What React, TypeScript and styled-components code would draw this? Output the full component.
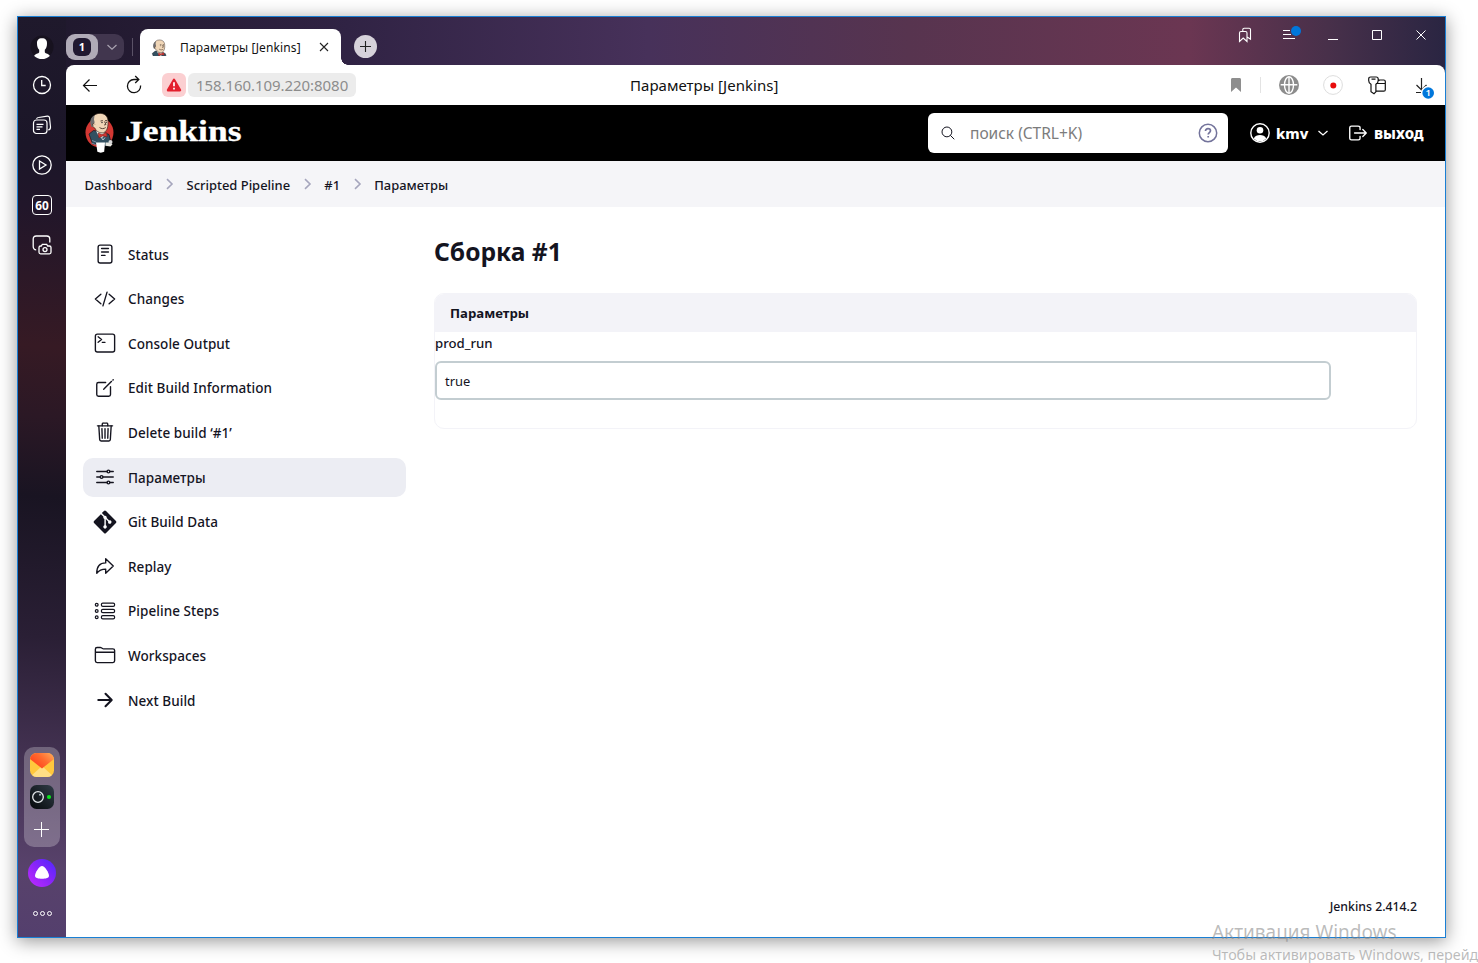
import React from 'react';
import styled, { createGlobalStyle, css } from 'styled-components';
import {
  IoReaderOutline, IoCodeSlashOutline, IoTerminalOutline, IoCreateOutline, IoTrashOutline,
  IoOptionsOutline, IoArrowRedoOutline, IoFolderOutline, IoArrowForward, IoLogOutOutline, IoSearchOutline,
} from 'react-icons/io5';
import { FaGitAlt } from 'react-icons/fa';

const Global = createGlobalStyle`
  * { box-sizing: border-box; }
  body { margin: 0; background: #fff; color: #14141f; font-family: "Noto Sans", "Open Sans", sans-serif; }
  svg { display: block; flex: none; }
`;

const Desktop = styled.div`
  position: relative;
  width: 1478px;
  height: 963px;
  padding: 16px 0 0 17px;
  overflow: hidden;
`;

const BrowserWindow = styled.div`
  display: flex;
  width: 1429px;
  height: 922px;
  border: 1px solid #1a7fd4;
  background: linear-gradient(90deg, #1e182c 0, #251b33 130px, #302344 330px, #47315a 630px, #57344f 890px, #6b3652 1170px, #48304a 1310px, #2a2542 1427px);
  box-shadow: 0 3px 17px rgba(0, 0, 0, 0.42);
`;

const Rail = styled.aside`
  display: flex;
  flex-direction: column;
  align-items: center;
  width: 48px;
  background: linear-gradient(184deg, #1f192c 0, #1b1628 130px, #21162a 190px, #361a24 330px, #2b1825 400px, #191422 480px, #2a1f35 620px, #41304f 730px, #58426b 850px, #543f6d 920px);
`;

const RailIcon = styled.div<{ $first?: boolean }>`
  display: flex;
  align-items: center;
  justify-content: center;
  width: 40px;
  height: 40px;
  ${p => p.$first && css`margin-top: 10px; margin-bottom: -2px;`}
`;

const Tray = styled.div`
  display: flex;
  flex-direction: column;
  align-items: center;
  gap: 8px;
  width: 36px;
  height: 100px;
  margin-top: auto;
  padding-top: 6px;
  border-radius: 10px;
  background: rgba(255, 255, 255, 0.25);
`;

const Assistant = styled.div`
  display: flex;
  align-items: center;
  justify-content: center;
  width: 28px;
  height: 28px;
  margin: 12px 0 24px;
  border-radius: 50%;
  background: linear-gradient(45deg, #c22aff, #8b25f8 50%, #4b28ff);
`;

const MoreDots = styled.div`
  display: flex;
  gap: 2px;
  margin-bottom: 21px;
  span { width: 5px; height: 5px; border: 1.4px solid #fff; border-radius: 50%; }
`;

const Main = styled.div`
  display: flex;
  flex-direction: column;
  flex: 1;
  min-width: 0;
`;

const TabStrip = styled.div`
  display: flex;
  height: 48px;
`;

const GroupPill = styled.div`
  display: flex;
  align-items: center;
  width: 58px;
  height: 26px;
  margin-top: 17px;
  border-radius: 9px;
  background: #41364e;
`;

const GroupCount = styled.div`
  display: flex;
  align-items: center;
  justify-content: center;
  width: 32px;
  height: 26px;
  margin-right: 7px;
  border-radius: 9px;
  background: #b0abb7;
  span {
    width: 18px; height: 18px; border-radius: 6px; background: #201830; color: #fff;
    font-size: 11px; font-weight: 700; line-height: 18px; text-align: center;
  }
`;

const StripDivider = styled.div`
  width: 1px;
  height: 18px;
  margin: 21px 7px 0 8px;
  background: #5b5267;
`;

const Tab = styled.div`
  position: relative;
  display: flex;
  align-items: center;
  width: 201px;
  height: 36px;
  margin-top: 12px;
  padding-left: 11px;
  border-radius: 8px 8px 0 0;
  background: #fff;
  &::after {
    content: "";
    position: absolute;
    right: -7px;
    bottom: 0;
    width: 7px;
    height: 7px;
    background: radial-gradient(circle at 7px 0, transparent 6.5px, #fff 7px);
  }
`;

const TabTitle = styled.span`
  width: 134px;
  margin-left: 12px;
  padding-top: 1px;
  color: #111;
  font-size: 12px;
  letter-spacing: 0.13px;
  line-height: 18px;
  white-space: nowrap;
`;

const NewTab = styled.div`
  display: flex;
  align-items: center;
  justify-content: center;
  width: 23px;
  height: 23px;
  margin: 18px 0 0 13px;
  border-radius: 50%;
  background: #d6d2da;
`;

const WindowControls = styled.div`
  display: flex;
  height: 36px;
  margin-left: auto;
  padding-right: 2px;
`;

const Slot = styled.div`
  display: flex;
  align-items: center;
  justify-content: center;
  width: 44px;
`;

const Toolbar = styled.div`
  display: flex;
  height: 40px;
  padding: 0 2px;
  border-radius: 8px 8px 0 0;
  background: #fff;
`;

const Warning = styled.div`
  display: flex;
  align-items: center;
  justify-content: center;
  width: 24px;
  height: 24px;
  margin: 8px 2px 0 6px;
  border-radius: 6px;
  background: #fbcfd1;
`;

const Address = styled.div`
  width: 168px;
  height: 24px;
  margin-top: 8px;
  padding-left: 8px;
  border-radius: 6px;
  background: #ececec;
  color: #8c8c8c;
  font-size: 15px;
  letter-spacing: -0.06px;
  line-height: 24px;
`;

const PageTitle = styled.div`
  margin-left: 274px;
  color: #111;
  font-size: 15px;
  letter-spacing: 0.03px;
  line-height: 40px;
`;

const Tools = styled.div`
  display: flex;
  margin-left: auto;
`;

const ToolDivider = styled.div`
  width: 1px;
  height: 16px;
  margin: 12px 6px 0 2px;
  background: #e3e3e3;
`;

const Header = styled.header`
  display: flex;
  align-items: center;
  height: 56px;
  padding: 0 20px 0 18px;
  background: #000;
  color: #fff;
`;

const Brand = styled.span`
  margin: -5px 0 0 10px;
  font: 700 29px/34px "Liberation Serif", serif;
  transform: scaleX(1.225);
  transform-origin: left;
  -webkit-text-stroke: 0.3px #fff;
`;

const Search = styled.div`
  display: flex;
  align-items: center;
  width: 300px;
  height: 40px;
  margin-left: auto;
  padding: 0 10px 0 12px;
  border-radius: 6px;
  background: #fff;
  color: #7c7c7c;
  font-size: 15.5px;
  span { flex: 1; margin-left: 14px; }
`;

const User = styled.div`
  display: flex;
  align-items: center;
  margin-left: 22px;
  font-size: 14.6px;
  b { width: 33px; margin: 0 8px 0 6px; font-weight: 800; }
`;

const Logout = styled.div`
  display: flex;
  align-items: center;
  margin-left: 18px;
  font-size: 15px;
  b { width: 51px; margin-left: 5px; font-weight: 800; }
`;

const Crumbs = styled.nav`
  display: flex;
  align-items: center;
  height: 46px;
  padding: 2px 0 0 18.5px;
  background: #f5f5f8;
  font-size: 12.95px;
  font-weight: 500;
  svg { margin: -3px 12.7px 0 12.5px; }
`;

const Content = styled.div`
  display: flex;
  flex: 1;
  padding: 28px 28px 0 17px;
  background: #fff;
`;

const Menu = styled.nav`
  display: flex;
  flex-direction: column;
  gap: 5.62px;
  width: 323px;
  margin-right: 28px;
`;

const MenuItem = styled.div<{ $active?: boolean }>`
  display: flex;
  align-items: center;
  gap: 12px;
  height: 39px;
  padding: 0 0 1px 11px;
  border-radius: 10px;
  background: ${p => (p.$active ? '#ecedf3' : 'transparent')};
  font-size: 13.5px;
  font-weight: 500;
  letter-spacing: 0.06px;
  span { padding-top: 1px; }
`;

const MenuIcon = styled.i`
  display: flex;
  justify-content: center;
  width: 22px;
`;

const Article = styled.main`
  display: flex;
  flex-direction: column;
  flex: 1;
`;

const Heading = styled.h1`
  height: 58px;
  margin: 0;
  font-size: 24.6px;
  font-weight: 700;
  line-height: 34px;
`;

const Panel = styled.section`
  height: 136px;
  border: 1px solid #f3f3f8;
  border-radius: 10px;
  overflow: hidden;
`;

const PanelTitle = styled.h2`
  height: 38px;
  margin: 0;
  padding: 1px 0 0 15px;
  background: #f3f3f8;
  font-size: 13.2px;
  font-weight: 700;
  line-height: 37px;
`;

const Label = styled.label`
  display: block;
  height: 29px;
  font-size: 13.2px;
  font-weight: 500;
  line-height: 22px;
`;

const Field = styled.div`
  width: 896px;
  height: 39px;
  padding-left: 8px;
  border: 2px solid #c3cdd1;
  border-radius: 6px;
  font-size: 12.9px;
  line-height: 36px;
`;

const Footer = styled.footer`
  height: 42px;
  padding: 1px 28px 0 0;
  background: #fff;
  font-size: 12.3px;
  font-weight: 500;
  line-height: 22px;
  text-align: right;
`;

const Watermark = styled.div`
  position: absolute;
  left: 1212px;
  top: 919px;
  color: rgba(135, 135, 135, 0.56);
  white-space: nowrap;
  font-size: 14.3px;
  line-height: 20px;
  strong { display: block; font-size: 19px; font-weight: 400; line-height: 26px; }
`;

const BoxedNumber = styled.div`
  width: 20px;
  height: 20px;
  border: 1.5px solid #fff;
  border-radius: 4px;
  color: #fff;
  font-size: 11.8px;
  font-weight: 700;
  line-height: 18px;
  text-align: center;
`;

const Mascot = ({ small }: { small?: boolean }) => (
  <svg width={small ? 17 : 31} height={small ? 17 : 42} viewBox={small ? '3 0 26 26' : '0 0 31 42'}>
    {!small && <ellipse cx="15.5" cy="20.5" rx="14" ry="15" fill="#d33833" />}
    <path d="M5 22 9.500 18.500l9.500 1.500 6 2.500 1.500 6-2 5.500L19 34l-1-2H8.500z" fill="#335061" stroke="#101820" strokeWidth=".7" />
    <path d="M12 18c1 4 3 7 6 8l3-3-1-4z" fill="#f0f0ea" />
    <path d="M7.500 9.500C8 4 11.500 1.200 16.500 1.400c5 .2 7.500 3.500 7.500 8 .2 4.500-.4 9.200-4.200 11.300-4.100.8-7.200-1.100-9-4.700-2.500-.8-3.500-3.500-3.300-6.500z" fill="#f0d6b7" stroke="#3b2d25" strokeWidth=".7" />
    <path d="M10.500 3.300C7.200 4.900 6 8 6.300 11.300l1.200 3.600 1.700-.4-.2-3.200 1.700-.6-.7-3.300z" fill="#6d6b6d" />
    <path d="M9 13.500c-1-1.600.8-2.900 1.700-1.200M16.500 9l2.400-.4M21 8.700l2-.1M20.400 9.500l1.600 3-2 .5M15.500 15.500c2 1.500 4.300 1.500 6.200 0" fill="none" stroke="#49372b" strokeWidth=".9" />
    <circle cx="18" cy="10.500" r=".7" fill="#222" /><circle cx="22.300" cy="10.300" r=".6" fill="#222" />
    <path d="m14 21 4 1.600 4.500-2.100.7 4.300-4.400-.9-4 2z" fill="#d33833" stroke="#681c1c" strokeWidth=".5" />
    {!small && <>
      <path d="m17 25 2 3 2-2.500" fill="none" stroke="#b7c5ce" strokeWidth="1" />
      <path d="M12 30.500h9l-.8 9.300c-2 1.100-5 1.100-6.800 0z" fill="#fff" />
      <path d="m7.500 31 4 1.500M8 28.500l4 1.500" stroke="#86a6bc" strokeWidth=".8" />
      <path d="M21.500 30.500h5l2 1.800-2 2.300-5-.8z" fill="#e9e7e0" />
      <circle cx="26.500" cy="30" r="2" fill="#d9d9d9" />
    </>}
  </svg>
);

const StepsIcon = () => (
  <svg width="22" height="22" viewBox="0 0 22 22" fill="none" stroke="currentColor" strokeWidth="1.2">
    {[4.8, 11, 17.2].map(y => (
      <g key={y}><circle cx="2.700" cy={y} r="1.400" /><rect x="7.400" y={y - 1.6} width="13.200" height="3.200" rx="1.400" /></g>
    ))}
  </svg>
);

const Chevron = () => (
  <svg width="9" height="12" viewBox="0 0 9 12" fill="none" stroke="#a6a6bd" strokeWidth="1.600"><path d="m2 1.200 5 4.800-5 4.800" /></svg>
);

const menuItems: { label: string; icon: React.ReactNode; active?: boolean }[] = [
  { label: 'Status', icon: <IoReaderOutline size={22} /> },
  { label: 'Changes', icon: <IoCodeSlashOutline size={22} /> },
  { label: 'Console Output', icon: <IoTerminalOutline size={22} /> },
  { label: 'Edit Build Information', icon: <IoCreateOutline size={22} /> },
  { label: 'Delete build ‘#1’', icon: <IoTrashOutline size={22} /> },
  { label: 'Параметры', icon: <IoOptionsOutline size={22} />, active: true },
  { label: 'Git Build Data', icon: <FaGitAlt size={26} /> },
  { label: 'Replay', icon: <IoArrowRedoOutline size={22} /> },
  { label: 'Pipeline Steps', icon: <StepsIcon /> },
  { label: 'Workspaces', icon: <IoFolderOutline size={22} /> },
  { label: 'Next Build', icon: <IoArrowForward size={22} /> },
];

export default function App() {
  return (
    <Desktop>
      <Global />
      <BrowserWindow>
        <Rail>
          <RailIcon $first>
            <svg width="24" height="24" viewBox="0 0 24 24"><circle cx="12" cy="12" r="11.500" fill="#17121f" /><path d="M12 3.200c3.500 0 5.200 2 5 5.200 0 2.800-.8 5.200-2.200 6.400v2.400c.6 1.500 4.500 1.500 5 3.700C17.800 23 14.800 24 12 24s-5.800-1-7.800-3.100c.5-2.200 4.400-2.200 5-3.700v-2.400C7.800 13.600 7 11.200 7 8.400c-.2-3.200 1.500-5.200 5-5.200z" fill="#fff" /></svg>
          </RailIcon>
          <RailIcon><svg width="20" height="20" viewBox="0 0 20 20" fill="none" stroke="#fff" strokeWidth="1.300"><circle cx="10" cy="10" r="8.500" /><path d="M9.700 5v5.500h4" /></svg></RailIcon>
          <RailIcon><svg width="20" height="20" viewBox="0 0 20 20" fill="none" stroke="#fff" strokeWidth="1.200"><rect x="1.500" y="5" width="13.500" height="13.500" rx="3" /><path d="M4.500 3.800C5 3 5.500 2.600 6.500 2.500l8.800-1.300c1.200-.1 2 .5 2.200 1.500l1 9.300c.1 1.500-.9 2.700-2.300 3M4.500 9.300h7M4.500 11.800h6M4.500 14.300h3.500" /></svg></RailIcon>
          <RailIcon><svg width="20" height="20" viewBox="0 0 20 20" fill="none" stroke="#fff" strokeWidth="1.300"><circle cx="10" cy="10" r="9.200" /><path d="m7.500 6 6.500 4-6.500 4z" /></svg></RailIcon>
          <RailIcon><BoxedNumber>60</BoxedNumber></RailIcon>
          <RailIcon><svg width="20" height="20" viewBox="0 0 20 20" fill="none" stroke="#fff" strokeWidth="1.300"><path d="M4.200 14.800c-1.900 0-3-1.500-3-3.300V4c0-1.800 1.200-3 3-3h10.600c1.800 0 3 1.200 3 3v3.500M9.300 11l1-1.600h4.400l1 1.600h1.700c1 0 1.600.6 1.600 1.500v4.800c0 .9-.6 1.500-1.600 1.500H8.600c-1 0-1.600-.6-1.600-1.500v-4.800c0-.9.6-1.500 1.600-1.500z" /><circle cx="13" cy="14.600" r="2" /></svg></RailIcon>
          <Tray>
            <svg width="24" height="24" viewBox="0 0 24 24">
              <defs><linearGradient id="mail" x1="0" y1=".7" x2="1" y2="0"><stop stopColor="#ff3d1c" /><stop offset=".5" stopColor="#ff6a2e" /><stop offset="1" stopColor="#ffad5c" /></linearGradient><clipPath id="mailClip"><rect width="24" height="24" rx="6.500" /></clipPath></defs>
              <g clipPath="url(#mailClip)"><path d="M0 0h24v24H0z" fill="#ffc83d" /><path d="M12 13 0 24h24z" fill="#ffdf85" /><path d="M0 0h24v6L12 15.500 0 6z" fill="url(#mail)" /></g>
            </svg>
            <svg width="24" height="24" viewBox="0 0 24 24"><defs><linearGradient id="cam" x1="0" y1="1" x2="1" y2="0"><stop stopColor="#05080a" /><stop offset="1" stopColor="#303c47" /></linearGradient></defs><rect width="24" height="24" rx="6.500" fill="url(#cam)" /><circle cx="8" cy="12" r="5.300" fill="none" stroke="#e4e8eb" strokeWidth="1.300" /><circle cx="10" cy="9.800" r="1" fill="#aeb8c0" /><circle cx="19" cy="12" r="2.100" fill="#08e51b" /></svg>
            <svg width="24" height="24" viewBox="0 0 24 24" stroke="#fff" strokeWidth="1"><path d="M4 12.500h15M11.500 5v15" /></svg>
          </Tray>
          <Assistant><svg width="16" height="16" viewBox="0 0 16 16"><path d="M8 1c2.700 0 7 6.600 7 9.800 0 2.200-3.200 3-7 3s-7-.8-7-3C1 7.600 5.300 1 8 1z" fill="#fff" /></svg></Assistant>
          <MoreDots><span /><span /><span /></MoreDots>
        </Rail>
        <Main>
          <TabStrip>
            <GroupPill>
              <GroupCount><span>1</span></GroupCount>
              <svg width="12" height="12" viewBox="0 0 12 12" fill="none" stroke="#aaa4b1" strokeWidth="1.200"><path d="m2.500 4 4.500 4.200L11.500 4" /></svg>
            </GroupPill>
            <StripDivider />
            <Tab>
              <Mascot small />
              <TabTitle>Параметры [Jenkins]</TabTitle>
              <svg width="20" height="20" viewBox="0 0 20 20" stroke="#222" strokeWidth="1.100"><path d="m6 6 8 8m0-8-8 8" /></svg>
            </Tab>
            <NewTab><svg width="13" height="13" viewBox="0 0 13 13" stroke="#222" strokeWidth="1.100"><path d="M1 6.500h11M6.500 1v11" /></svg></NewTab>
            <WindowControls>
              <Slot><svg width="14" height="16" viewBox="0 0 14 16" fill="none" stroke="#fff" strokeWidth="1.100"><path d="M1.500 14.500V6c0-.9.600-1.500 1.500-1.500h4.500C8.400 4.500 9 5.100 9 6v8.500L5.200 11zM4.800 4.200V2.600c0-.8.500-1.300 1.300-1.300h5.100c.8 0 1.300.5 1.300 1.300v9.600L9.200 10" /></svg></Slot>
              <Slot><svg width="24" height="22" viewBox="0 0 24 22" stroke="#fff" strokeWidth="1.100"><path d="M6 6.500h7M6 10.500h8M6 14.500h12" /><circle cx="19" cy="7" r="5" fill="#0077db" stroke="none" /></svg></Slot>
              <Slot><svg width="10" height="12" viewBox="0 0 10 12" stroke="#fff"><path d="M0 10.500h10" /></svg></Slot>
              <Slot><svg width="10" height="10" viewBox="0 0 10 10" fill="none" stroke="#fff"><path d="M.5.500h9v9h-9z" /></svg></Slot>
              <Slot><svg width="10" height="10" viewBox="0 0 10 10" stroke="#fff"><path d="m.5.500 9 9m0-9-9 9" /></svg></Slot>
            </WindowControls>
          </TabStrip>
          <Toolbar>
            <Slot><svg width="16" height="16" viewBox="0 0 16 16" fill="none" stroke="#111" strokeWidth="1.200"><path d="M15 8.500H1.500M7.500 2.500l-6 6 6 6" /></svg></Slot>
            <Slot><svg width="18" height="20" viewBox="0 0 18 20" fill="none" stroke="#111" strokeWidth="1.300"><path d="M15.600 10.500a6.600 6.600 0 1 1-6.600-6h4.500M10.200 1l3.600 3.500L10.200 8" /></svg></Slot>
            <Warning><svg width="16" height="14" viewBox="0 0 16 14"><path d="M8 1.800 14 12.200H2z" fill="#e31f2d" stroke="#e31f2d" strokeWidth="2.400" strokeLinejoin="round" /><path d="M8 4.300v4M8 9.800v1.700" stroke="#fff" strokeWidth="1.700" /></svg></Warning>
            <Address>158.160.109.220:8080</Address>
            <PageTitle>Параметры [Jenkins]</PageTitle>
            <Tools>
              <Slot><svg width="10" height="14" viewBox="0 0 10 14"><path d="M0 1.500C0 .600.600 0 1.500 0h7C9.400 0 10 .600 10 1.500V14L5 9.500 0 14z" fill="#8e8e8e" /></svg></Slot>
              <ToolDivider />
              <Slot><svg width="20" height="20" viewBox="0 0 20 20"><circle cx="10" cy="10" r="10" fill="#8c8c8c" /><g fill="none" stroke="#fff" strokeWidth="1.400"><ellipse cx="10" cy="10" rx="4.500" ry="8.300" /><path d="M1.700 9.700h16.600M10 1.700v16.600" /></g></svg></Slot>
              <Slot><svg width="20" height="20" viewBox="0 0 20 20"><circle cx="10" cy="10" r="9.400" fill="#fff" stroke="#ddd" /><circle cx="10.300" cy="10.500" r="3" fill="#e80c0c" /></svg></Slot>
              <Slot><svg width="18" height="19" viewBox="0 0 18 19" fill="none" stroke="#111" strokeWidth="1.200"><path d="M3 8.300C1.500 7.500.700 6.500.700 4.500V3C.700 1.700 1.500 1 2.700 1h5.500c1.200 0 2 .700 2 2v1.500c0 2-.800 3-2.300 3.800v7.500L6 17.700l-3-2zM3.500 3.200h4M7.900 7.500h9.400M11 5V4h4.800c1 0 1.500.500 1.500 1.500v8.200c0 1-.500 1.500-1.500 1.500H8" /></svg></Slot>
              <Slot><svg width="26" height="28" viewBox="0 0 26 28"><path d="M13.500 7v12M8.500 14l5 5 5-5M8 21.500h8" fill="none" stroke="#222" strokeWidth="1.200" /><circle cx="20" cy="22" r="7.200" fill="#fff" /><circle cx="20.200" cy="22" r="5.800" fill="#0077db" /><text x="20.200" y="25.400" fill="#fff" fontSize="9.500" fontWeight="600" textAnchor="middle">1</text></svg></Slot>
            </Tools>
          </Toolbar>
          <Header>
            <Mascot />
            <Brand>Jenkins</Brand>
            <Search>
              <IoSearchOutline size={16} color="#14141f" />
              <span>поиск (CTRL+K)</span>
              <svg width="20" height="20" viewBox="0 0 20 20" fill="none" stroke="#73739b" strokeWidth="1.500"><circle cx="10" cy="10" r="8.700" /><path d="M7.500 8c0-1.400 1-2.400 2.500-2.400s2.500.900 2.500 2.200c0 1.700-2.300 1.800-2.300 3.600M10.200 13v1.500" strokeWidth="1.700" /></svg>
            </Search>
            <User>
              <svg width="20" height="20" viewBox="0 0 20 20"><circle cx="10" cy="10" r="9.200" fill="none" stroke="#fff" strokeWidth="1.400" /><circle cx="10" cy="7.300" r="3.300" fill="#fff" /><path d="M3.700 15.500C5 12.900 7.400 12 10 12s5 .900 6.300 3.500a8.400 8.400 0 0 1-12.600 0z" fill="#fff" /></svg>
              <b>kmv</b>
              <svg width="12" height="10" viewBox="0 0 12 10" fill="none" stroke="#fff" strokeWidth="1.300"><path d="m1.500 3 4.500 4 4.500-4" /></svg>
            </User>
            <Logout>
              <IoLogOutOutline size={22} />
              <b>выход</b>
            </Logout>
          </Header>
          <Crumbs>
            Dashboard<Chevron />Scripted Pipeline<Chevron />#1<Chevron />Параметры
          </Crumbs>
          <Content>
            <Menu>
              {menuItems.map(item => (
                <MenuItem key={item.label} $active={item.active}>
                  <MenuIcon>{item.icon}</MenuIcon>
                  <span>{item.label}</span>
                </MenuItem>
              ))}
            </Menu>
            <Article>
              <Heading>Сборка #1</Heading>
              <Panel>
                <PanelTitle>Параметры</PanelTitle>
                <Label>prod_run</Label>
                <Field>true</Field>
              </Panel>
            </Article>
          </Content>
          <Footer>Jenkins 2.414.2</Footer>
        </Main>
      </BrowserWindow>
      <Watermark><strong>Активация Windows</strong>Чтобы активировать Windows, перейд</Watermark>
    </Desktop>
  );
}
